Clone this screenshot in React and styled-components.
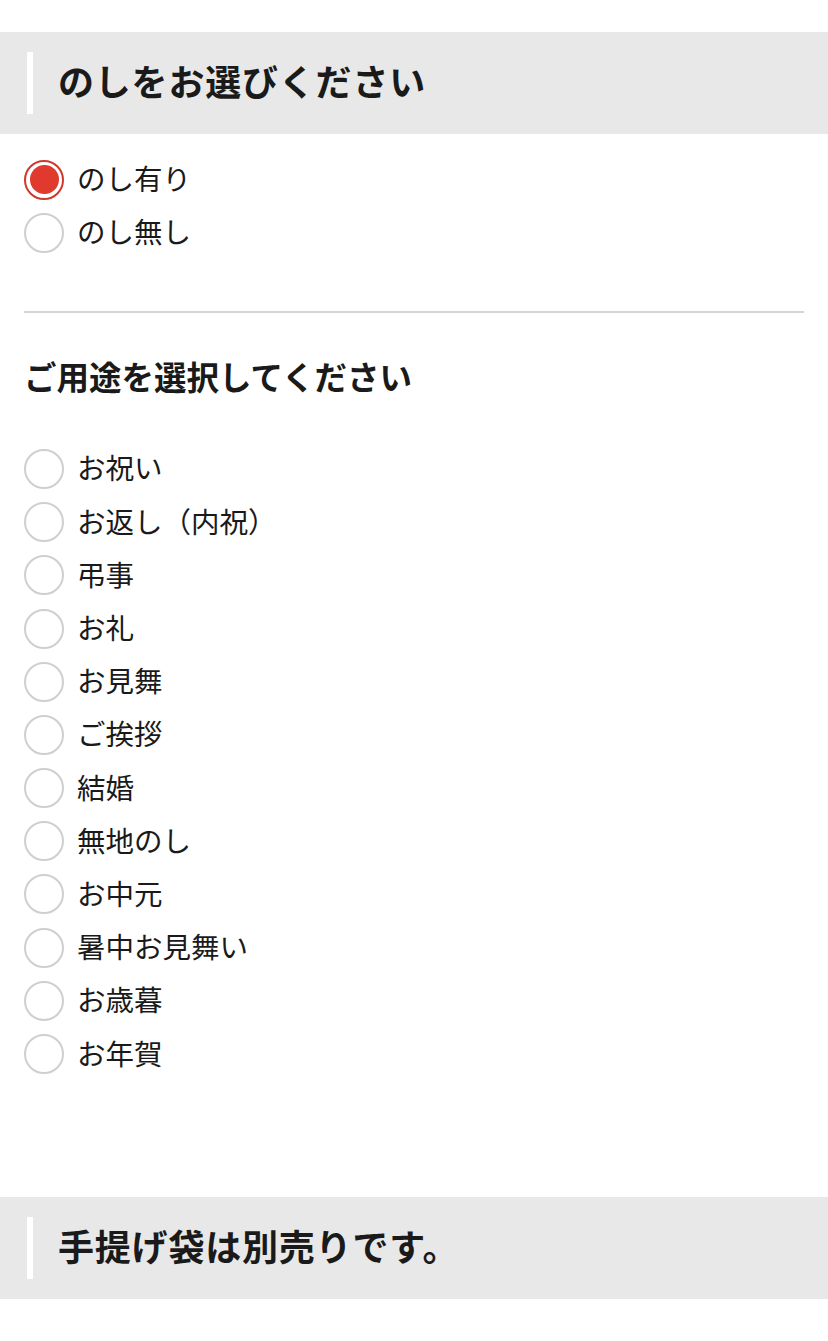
import styled, { createGlobalStyle } from "styled-components"
import { useState } from "react"

const GlobalStyle = createGlobalStyle`
    body {
        margin: 0;
        background: #fff;
        color: #1a1a1a;
        font-family: "Noto Sans CJK JP", "Noto Sans", sans-serif;
    }
`
const Page = styled.div`
    width: 828px;
    padding-top: 32px;
    padding-bottom: 44px;
`
const Heading = styled.h2`
    margin: 0;
    height: 102px;
    background-color: #e8e8e8;
    display: flex;
    align-items: center;
    padding-left: 27px;
    gap: 25px;
    font-size: 36px;
    font-weight: 700;
    letter-spacing: 0.8px;
    &::before {
        content: "";
        width: 6px;
        height: 62px;
        background-color: #fff;
    }
`
const HeadingText = styled.span`
    margin-bottom: 6px;
`
const Section = styled.div`
    padding: 0 24px;
`
const Group = styled.div`
    display: flex;
    flex-direction: column;
    padding-top: ${props => props.$top}px;
`
const Row = styled.label`
    height: 53.2px;
    display: flex;
    align-items: center;
    gap: 13px;
    font-size: 28.5px;
    cursor: pointer;
`
const RowText = styled.span`
    margin-bottom: 4px;
`
const Radio = styled.span`
    box-sizing: border-box;
    width: 40px;
    height: 40px;
    flex-shrink: 0;
    border-radius: 50%;
    border: 2px solid ${props => props.$on ? "#d0382d" : "#cfcfcf"};
    padding: ${props => props.$on ? "3.5px" : "0"};
    &::after {
        content: "";
        display: ${props => props.$on ? "block" : "none"};
        width: 100%;
        height: 100%;
        border-radius: 50%;
        background-color: #e0392e;
    }
`
const Divider = styled.hr`
    margin: 52px 0 0;
    border: none;
    height: 2px;
    background-color: #d4d4d4;
`
const Title = styled.h3`
    margin: 41px 0 3px;
    font-size: 32.5px;
    line-height: 44px;
    font-weight: 700;
`
const Footer = styled(Heading)`
    margin-top: 116px;
`

const uses = [
    "お祝い", "お返し（内祝）", "弔事", "お礼", "お見舞", "ご挨拶",
    "結婚", "無地のし", "お中元", "暑中お見舞い", "お歳暮", "お年賀",
]

function App() {
    const [noshi, setNoshi] = useState("yes")
    const [use, setUse] = useState(null)
    return (
        <Page>
            <GlobalStyle />
            <Heading><HeadingText>のしをお選びください</HeadingText></Heading>
            <Section>
                <Group $top={19}>
                    <Row onClick={() => setNoshi("yes")}>
                        <Radio $on={noshi === "yes"} /><RowText>のし有り</RowText>
                    </Row>
                    <Row onClick={() => setNoshi("no")}>
                        <Radio $on={noshi === "no"} /><RowText>のし無し</RowText>
                    </Row>
                </Group>
                <Divider />
                <Title>ご用途を選択してください</Title>
                <Group $top={41}>
                    {uses.map(u => (
                        <Row key={u} onClick={() => setUse(u)}>
                            <Radio $on={use === u} /><RowText>{u}</RowText>
                        </Row>
                    ))}
                </Group>
            </Section>
            <Footer><HeadingText>手提げ袋は別売りです。</HeadingText></Footer>
        </Page>
    )
}

export default App
